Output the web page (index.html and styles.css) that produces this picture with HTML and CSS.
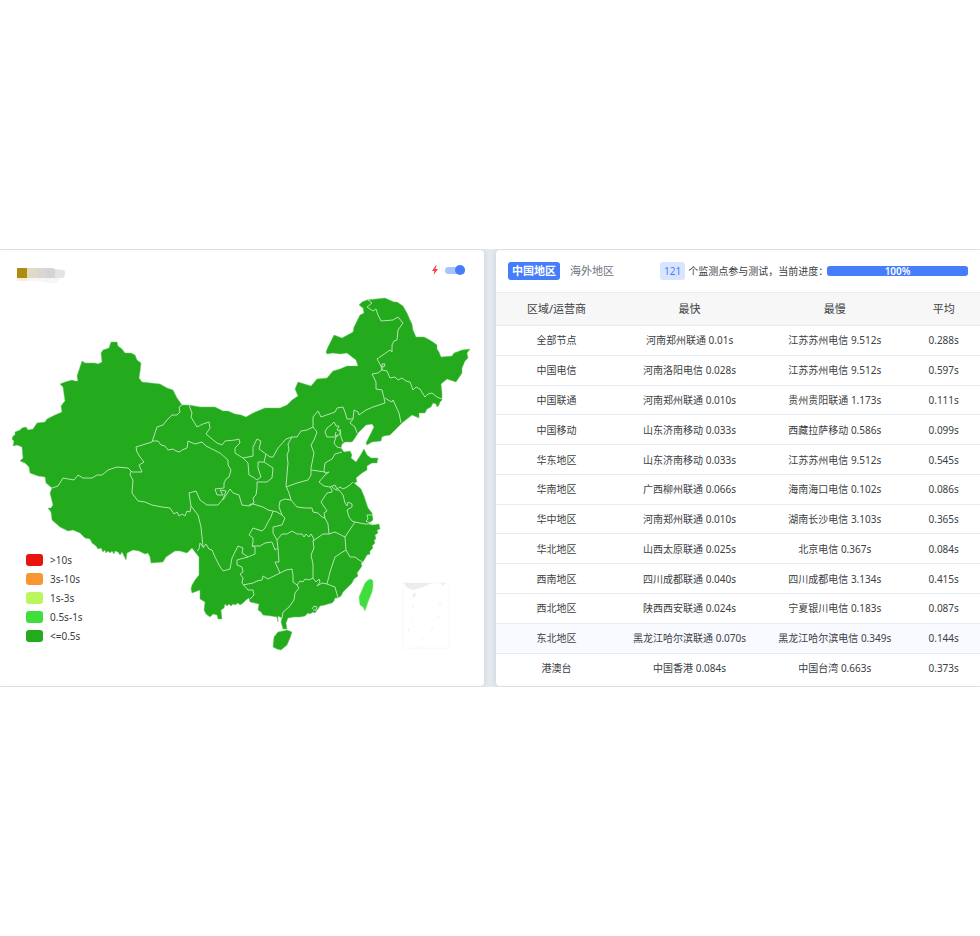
FILE: index.html
```html
<!DOCTYPE html>
<html lang="zh-CN">
<head>
  <meta charset="UTF-8" />
  <meta name="viewport" content="width=device-width, initial-scale=1.0"/>
  <title>网站测速</title>
  <link rel="stylesheet" href="styles.css">
</head>
<body>
  <main class="dashboard">
    <!-- Map panel -->
    <section class="panel map-panel">
      <div class="map-head">
        <svg class="logo" viewBox="0 0 48 16" aria-hidden="true">
          <path fill="#f7eed3" d="M0,10h10v3H0z"/>
          <path fill="#f6f6f6" d="M10,10h33l-4,5h-8l-10,-2H10z"/>
          <path fill="#ad8c12" d="M0,0h10v10H0z"/>
          <path fill="#e2dbc4" d="M10,0h10v10H10z"/>
          <path fill="#d9d6d6" d="M20,0h9v10h-9z"/>
          <path fill="#d4d3d5" d="M29,0h6l3,1v9h-9z"/>
          <path fill="#e3e3e3" d="M38,1l8,1q2,0 2,3t-2,5h-8z"/>
        </svg>
        <label class="switch">
          <svg class="bolt" viewBox="0 0 6 10" aria-hidden="true"><path d="M4,0L0,6h2.4L1.6,10L6,4H3.4L4.6,0z"/></svg>
          <input type="checkbox" aria-label="快速模式" checked>
        </label>
      </div>

      <svg class="china-map" viewBox="0 290 484 370" role="img" aria-label="中国地图">
        <!-- Mainland -->
        <path class="land" d="M12,439 L13,436 15,435 15,432 20,430 22,428 26,427 28,430 33,429 37,423 45,422 47,419 55,415 62,412 61,406 64,402 65,401 63,387 60,384 65,382 72,380 75,381 78,381 77,376 82,361 85,363 95,363 98,364 102,362 101,353 103,350 109,348 111,342 117,342 118,346 122,349 125,353 131,353 135,355 137,360 141,363 140,372 139,378 142,382 160,384 167,388 173,390 177,398 182,405
          L189,405 200,407 215,407 223,411 228,411 235,414 241,415 246,417 253,413 265,408 280,408 287,405 292,400 298,396 295,389 298,382 311,386 317,379 327,378 333,371 340,369 347,366 358,366 356,360 352,357 347,353 340,354 333,353 327,354 326,352 328,347 334,335 342,338 353,332 354,327 360,315 364,313 363,308 359,305 362,302 367,300 385,298 394,302 397,302 403,306 407,313 410,320 412,324 413,330 416,337 424,337 428,339 433,342 437,345 437,349 439,352 441,357 452,356 454,353 462,350 470,349 467,353 468,358 465,361 462,368 462,373 456,382 447,379 441,384 442,393 442,400
          L440,402 439,405 437,407 436,404 433,403 431,407 427,409 425,413 419,413 419,418 412,415 407,419 402,423 396,429 390,435 384,436 382,437 381,441 372,442 367,445 366,443 369,437 374,427 372,424 366,425 358,433 355,438 352,442 345,442 342,444 341,448 344,452 350,451 352,455 351,458 356,462 360,456 364,449 367,455 371,458 378,458 377,463 372,463 367,466 367,470 362,473 356,478 357,482 354,483 361,489 364,496 366,502 368,508 372,513 373,520 368,524 373,525 379,524 380,529 377,530 378,533 375,535 376,539 374,540 375,543 372,546 373,548 370,551 370,554 367,555 363,562 361,563 362,566 360,569 357,573 358,576 354,579 352,583 347,588 343,592 341,596 338,598 335,598 334,601 332,603 328,604 325,605 320,606 318,609 317,610 315,613 313,612 310,614 308,613 305,616 300,617 294,617 288,618 286,623 287,629 283,629 281,622 282,618 278,616 278,622 277,617 271,616 263,615 261,612 258,610 259,604 250,602 249,598 246,600 243,603 240,605 238,603 235,605 233,604 231,606 229,604 227,606 225,604 224,608 221,610 222,619 218,619 217,615 213,614 210,617 206,614 204,610 205,602 200,599 200,590 192,593 191,589 192,585 195,580 199,575 199,557 195,552 192,548 190,550 187,553 180,551 175,551 166,557 163,562 151,563 150,557 148,553 145,554 139,551 133,550 127,553 126,560 122,552 120,555 118,552 115,551 114,554 112,551 110,553 108,551 106,553 105,550 103,552 101,548 98,549 96,546 92,543 90,539 85,538 80,533 73,530 68,531 60,527 52,520 51,512 48,508 51,508 53,505 50,493 52,488 46,483 45,477 38,476 30,473 29,467 25,463 20,461 23,458 22,447 17,445 13,446 14,441 z"/>
        <!-- Hainan, Taiwan -->
        <path class="land" d="M278,632 L283,631 287,630 292,632 290,638 287,645 281,650 277,649 273,647 274,637 z"/>
        <path class="land light" d="M371,579 L373,581 373,587 372,592 368,602 365,611 363,607 360,605 359,597 362,590 365,583 368,580 z"/>
        <!-- Provincial borders: north west -->
        <g class="borders">
          <path d="M52,488 L58,486 63,478 74,480 78,475 83,478 92,478 97,475 102,475 108,470 117,467 128,468 132,472 142,472 139,465 144,462 140,457 137,452 136,447 152,442 157,427 163,425 167,420 172,415 177,415 180,412 179,407 182,405"/>
          <path d="M189,405 L192,413 191,417 197,427 203,424 209,422 210,428 206,434 212,439 217,443 222,445 225,441 235,440 239,439 240,443 235,448 235,453 243,458 253,456 253,447 257,439 261,441 259,449 266,454 270,457 273,457 278,448 286,439 292,437 297,437 301,431 307,430 313,427 313,417 318,411 321,417 335,412 337,408 343,407 345,412 347,419 353,419 354,410 358,412 359,415 366,410 373,407 385,403 384,398 382,390 376,389 376,382 372,374 378,373 382,370 381,366 377,359 390,350 392,352 392,345 394,341 397,340 398,330 403,323 398,317 393,320 381,321 378,315 376,309 373,311 367,307 372,303 368,300"/>
          <path d="M152,441 L158,441 161,445 165,446 168,450 173,449 176,451 180,452 182,450 187,448 188,441 195,444 202,442 206,446 212,449 220,453 228,460 228,465 231,470 229,477 226,479 224,483 224,488 215,489 217,495 223,495 220,490 226,491 223,499 218,505 207,505 200,500 196,491 189,493 191,506"/>
          <path d="M131,471 L130,475 133,480 132,493 138,501 145,502 152,505 162,507 170,508 174,514 177,512 179,516 182,514 185,516 187,511 190,512 191,506 198,515 201,527 203,547 200,543 199,549 197,551"/>
          <path d="M243,458 L248,463 249,475 253,477 257,480 261,477 258,468 258,462 264,462 266,454"/>
          <path d="M264,462 L273,468 272,478 267,482 257,482 257,488 256,495 253,498 254,503 249,505"/>
        </g>
        <!-- north east -->
        <g class="borders">
          <path d="M382,370 L387,371 390,378 395,377 398,380 402,378 406,381 410,382 413,390 416,387 420,389 425,397 428,394 432,393 437,397 442,399"/>
          <path d="M382,370 L382,364 385,364 384,367 381,366"/>
          <path d="M385,398 L388,400 392,402 393,400 399,413 401,423"/>
          <path d="M353,419 L350,423 355,427 357,433"/>
          <path d="M325,432 L327,428 331,425 334,422 336,426 339,426 337,430 340,431 340,434 336,437 327,437 z"/>
          <path d="M340,429 L341,437 343,442 M336,432 L335,436 338,435 M336,437 L334,443 337,447 341,448"/>
          <path d="M342,452 L335,454 332,459 325,463 324,470 325,473 329,472 325,475 319,482 324,486 330,487 335,485 337,489 340,487 343,489 347,487 350,485 353,482"/>
          <path d="M313,427 L317,432 314,440 311,445 314,453 311,468 311,475 308,480 297,483 286,487 M311,470 L325,472"/>
          <path d="M292,437 L288,444 289,450 287,455 288,463 286,486 289,493 291,500 297,507 305,508 312,508 313,512 318,513 322,517 325,518 328,524 329,534"/>
        </g>
        <!-- centre and south -->
        <g class="borders">
          <path d="M223,500 L230,489 233,493 239,495 242,505 249,506 253,504 263,507 268,510 273,511 277,512 282,515 279,507 280,501 285,499 291,500"/>
          <path d="M203,548 L206,544 209,549 212,550 215,557 219,565 223,571 230,569 232,558 238,546 243,548 242,553 248,557 255,554 255,547 252,546"/>
          <path d="M273,511 L271,517 268,522 265,528 262,531 253,528 249,535 253,538 253,542 252,546 260,546 265,543 272,542 275,550 278,548 277,540 273,533 273,527 282,525 285,518 282,515"/>
          <path d="M248,557 L237,560 237,565 242,567 243,572 240,574 243,578 242,583 248,590 253,590 254,595 250,599"/>
          <path d="M243,585 L248,584 253,583 257,581 262,580 263,576 268,579 272,577 280,573 275,562 279,562 278,548"/>
          <path d="M277,540 L282,534 287,534 292,531 297,534 302,534 304,537 306,534 309,537 311,534 314,539 313,541 323,534 329,534 335,532 345,537"/>
          <path d="M280,573 L286,570 292,569 293,575 293,582 297,585 300,581 303,582 305,579 309,580 313,578 316,582 319,579 320,582 317,586 322,583 327,584"/>
          <path d="M297,585 L299,588 295,593 294,600 289,607 283,612 282,618"/>
          <path d="M313,541 L314,548 311,555 313,564 313,578"/>
          <path d="M338,598 L335,587 327,584 330,572 335,557 341,553 346,550 345,537 351,528 355,522 365,524 368,524"/>
          <path d="M346,550 L350,557 355,557 359,560 363,562"/>
          <path d="M325,518 L324,513 327,511 321,502 327,493 332,492 332,490 330,487"/>
          <path d="M332,487 L336,490 339,490 343,495 345,503 347,506 348,502 352,504 352,507 347,510 349,517 352,521 355,522"/>
          <path d="M373,515 L367,515 368,519 366,521 372,524"/>
          <path d="M312,609 L314,606 317,607 316,610 313,610"/>
        </g>
        <!-- South China Sea inset -->
        <rect class="inset" x="403" y="583" width="46" height="65"/>
        <path class="inset-land" d="M404,583 h28 l-9,4 -10,3 -6,-2 z M441,583 h4 l-2,3 z M412,597 l1,-3 3,-1 -1,4 z"/>
        <path class="inset-line" d="M440,602 v4 M438,618 l2,-3 M431,631 l2,-3 M421,640 l2,-1 M408,628 l1,3 M412,620 l2,-2 M413,605 v3"/>
      </svg>

      <ul class="legend">
        <li><i class="swatch red"></i>&gt;10s</li>
        <li><i class="swatch orange"></i>3s-10s</li>
        <li><i class="swatch lime"></i>1s-3s</li>
        <li><i class="swatch light-green"></i>0.5s-1s</li>
        <li><i class="swatch green"></i>&lt;=0.5s</li>
      </ul>
    </section>

    <!-- Result panel -->
    <section class="panel result-panel">
      <div class="result-head">
        <button type="button" class="tab active">中国地区</button>
        <button type="button" class="tab">海外地区</button>
        <div class="status">
          <span class="count">121</span>
          <span class="status-text">个监测点参与测试，当前进度：</span>
          <div class="progress"><div class="progress-bar" style="width: 100%">100%</div></div>
        </div>
      </div>
      <table>
        <thead>
          <tr><th>区域/运营商</th><th>最快</th><th>最慢</th><th>平均</th></tr>
        </thead>
        <tbody>
          <tr><td>全部节点</td><td>河南郑州联通 0.01s</td><td>江苏苏州电信 9.512s</td><td>0.288s</td></tr>
          <tr><td>中国电信</td><td>河南洛阳电信 0.028s</td><td>江苏苏州电信 9.512s</td><td>0.597s</td></tr>
          <tr><td>中国联通</td><td>河南郑州联通 0.010s</td><td>贵州贵阳联通 1.173s</td><td>0.111s</td></tr>
          <tr><td>中国移动</td><td>山东济南移动 0.033s</td><td>西藏拉萨移动 0.586s</td><td>0.099s</td></tr>
          <tr><td>华东地区</td><td>山东济南移动 0.033s</td><td>江苏苏州电信 9.512s</td><td>0.545s</td></tr>
          <tr><td>华南地区</td><td>广西柳州联通 0.066s</td><td>海南海口电信 0.102s</td><td>0.086s</td></tr>
          <tr><td>华中地区</td><td>河南郑州联通 0.010s</td><td>湖南长沙电信 3.103s</td><td>0.365s</td></tr>
          <tr><td>华北地区</td><td>山西太原联通 0.025s</td><td>北京电信 0.367s</td><td>0.084s</td></tr>
          <tr><td>西南地区</td><td>四川成都联通 0.040s</td><td>四川成都电信 3.134s</td><td>0.415s</td></tr>
          <tr><td>西北地区</td><td>陕西西安联通 0.024s</td><td>宁夏银川电信 0.183s</td><td>0.087s</td></tr>
          <tr class="current"><td>东北地区</td><td>黑龙江哈尔滨联通 0.070s</td><td>黑龙江哈尔滨电信 0.349s</td><td>0.144s</td></tr>
          <tr><td>港澳台</td><td>中国香港 0.084s</td><td>中国台湾 0.663s</td><td>0.373s</td></tr>
        </tbody>
      </table>
    </section>
  </main>
</body>
</html>
```
FILE: styles.css
```css
/* RESET & BASE */
* {
  margin: 0; padding: 0;
  box-sizing: border-box;
}
body {
  min-height: 100vh;
  display: flex; align-items: center;
  background: #fff;
  color: #3c4043;
  font-family: "Noto Sans", "Noto Sans CJK SC", sans-serif;
  font-size: 10px;
  line-height: 16px;
}

/* LAYOUT */
.dashboard {
  width: 100%;
  display: grid;
  grid-template-columns: 1fr 1fr;
  gap: 12px;
  padding: 1px 0;
  background: #e4e9ef;
  overflow: hidden;
}
.panel {
  background: #fff;
  box-shadow: 0 0 5px rgba(120,135,160,0.25);
}

/* MAP PANEL */
.map-panel {
  position: relative;
  border-radius: 0 4px 4px 0;
}
.map-head {
  height: 40px;
  padding: 0 19px 0 17px;
  display: flex; align-items: center;
  justify-content: space-between;
}
.logo {
  width: 48px; height: 16px;
  margin-top: 12px;
}
.switch {
  display: flex; align-items: center;
  gap: 7px; cursor: pointer;
}
.bolt { width: 6px; height: 10px; fill: #f5404a; }
.switch input {
  appearance: none;
  width: 20px; height: 7px;
  border-radius: 4px;
  background: #a9c3fb;
  display: flex; align-items: center;
  cursor: pointer;
}
.switch input::before {
  content: "";
  width: 10px; height: 10px;
  flex: none;
  border-radius: 50%;
  background: #457dfb;
}
.switch input:checked { justify-content: flex-end; }
.china-map { display: block; width: 100%; }
.land {
  fill: #23aa1d;
  stroke: #6cc768; stroke-width: 0.5;
  stroke-linejoin: round;
}
.land.light { fill: #40de3d; stroke: #7be879; }
.borders {
  fill: none;
  stroke: #b4e3b1; stroke-width: 1;
  stroke-linejoin: round;
}
.inset { fill: none; stroke: #f8f8f8; }
.inset-land { fill: #ececec; }
.inset-line { fill: none; stroke: #f1f1f1; }

/* LEGEND */
.legend {
  position: absolute; left: 26px; bottom: 41px;
  list-style: none;
}
.legend li {
  height: 19px;
  display: flex; align-items: center;
  gap: 7px;
}
.swatch {
  width: 17px; height: 12px;
  border-radius: 3px;
}
.red { background: #e8120f; }
.orange { background: #f89731; }
.lime { background: #bcf65f; }
.light-green { background: #40de3d; }
.green { background: #23aa1d; }

/* RESULT PANEL */
.result-panel {
  border-radius: 4px 0 0 4px;
  padding-bottom: 4px;
}
.result-head {
  height: 42px;
  padding: 0 12px;
  display: flex; align-items: center;
  gap: 6px;
}
.tab {
  height: 18px;
  padding: 0 4px;
  border: none; border-radius: 3px;
  background: none;
  color: #6b7480;
  font: 11px/18px "Noto Sans", "Noto Sans CJK SC", sans-serif;
  white-space: nowrap;
  cursor: pointer;
}
.tab.active {
  background: #457dfb;
  color: #fff;
  font-weight: 700;
}
.status {
  flex: 1;
  margin-left: 36px;
  display: flex; align-items: center;
  gap: 3px;
  white-space: nowrap;
}
.count {
  padding: 0 4px;
  border-radius: 3px;
  background: #d9e4fe;
  color: #457dfb;
  line-height: 18px;
}
.status-text { margin-right: -4px; }
.progress {
  flex: 1;
  height: 10px;
  border-radius: 3px;
  background: #e9ecef;
}
.progress-bar {
  height: 100%;
  border-radius: 3px;
  background: #457dfb;
  color: #fff;
  font-weight: 600;
  line-height: 10px;
  text-align: center;
}

/* TABLE */
table {
  width: 100%; height: 390px;
  table-layout: fixed;
  border-collapse: collapse;
  text-align: center;
}
th {
  width: 30%; height: 33px;
  background: #f7f7f7;
  border-top: 1px solid #e9ecf0;
  font-size: 11px; font-weight: 400;
}
th:first-child { width: 25%; }
th:last-child { width: 15%; }
td {
  border-top: 1px solid #e4ebf2;
  white-space: nowrap;
}
.current { background: #f8faff; }
```
